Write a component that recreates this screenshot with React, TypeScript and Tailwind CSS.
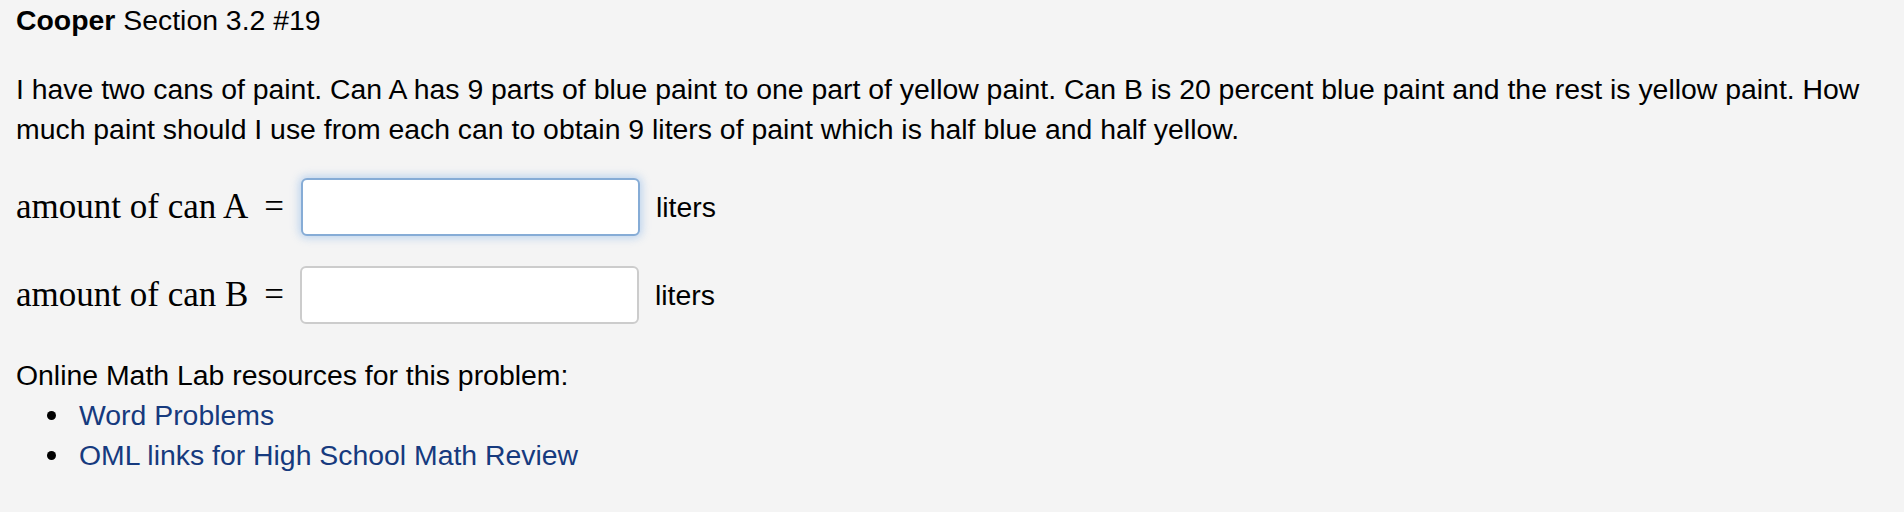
export default function App() {
  return (
    <div className="min-h-[512px] w-full bg-[#f4f4f4] px-4 text-[28.4px] leading-[40px] text-black" style={{ fontFamily: '"Liberation Sans", Arial, sans-serif' }}>
      <div className="h-[40px]">
        <b>Cooper</b> Section 3.2 #19
      </div>
      <p className="mt-[29px]">
        I have two cans of paint. Can A has 9 parts of blue paint to one part of yellow paint. Can B is 20 percent blue paint and the rest is yellow paint. How much paint should I use from each can to obtain 9 liters of paint which is half blue and half yellow.
      </p>
      <div className="mt-[29px] flex items-center gap-4">
        <span className="w-[269px] whitespace-nowrap font-['Liberation_Serif',serif] text-[35px]">
          amount of can A<span className="ml-[16px]">=</span>
        </span>
        <input className="h-[58px] w-[339px] rounded-[6px] border-2 border-[#86acd6] bg-white shadow-[0_0_8px_2px_rgba(120,170,230,0.45)] outline-none" />
        <span>liters</span>
      </div>
      <div className="mt-[30px] flex items-center gap-4">
        <span className="w-[268px] whitespace-nowrap font-['Liberation_Serif',serif] text-[35px]">
          amount of can B<span className="ml-[16px]">=</span>
        </span>
        <input className="h-[58px] w-[339px] rounded-[6px] border-2 border-[#cccccc] bg-white outline-none" />
        <span>liters</span>
      </div>
      <div className="mt-[31px]">Online Math Lab resources for this problem:</div>
      <ul className="pl-[31px]">
        {["Word Problems", "OML links for High School Math Review"].map((t) => (
          <li key={t} className="flex items-center">
            <span className="mr-[23px] h-[9px] w-[9px] rounded-full bg-black" />
            <a className="text-[#163a7e]">{t}</a>
          </li>
        ))}
      </ul>
    </div>
  );
}
